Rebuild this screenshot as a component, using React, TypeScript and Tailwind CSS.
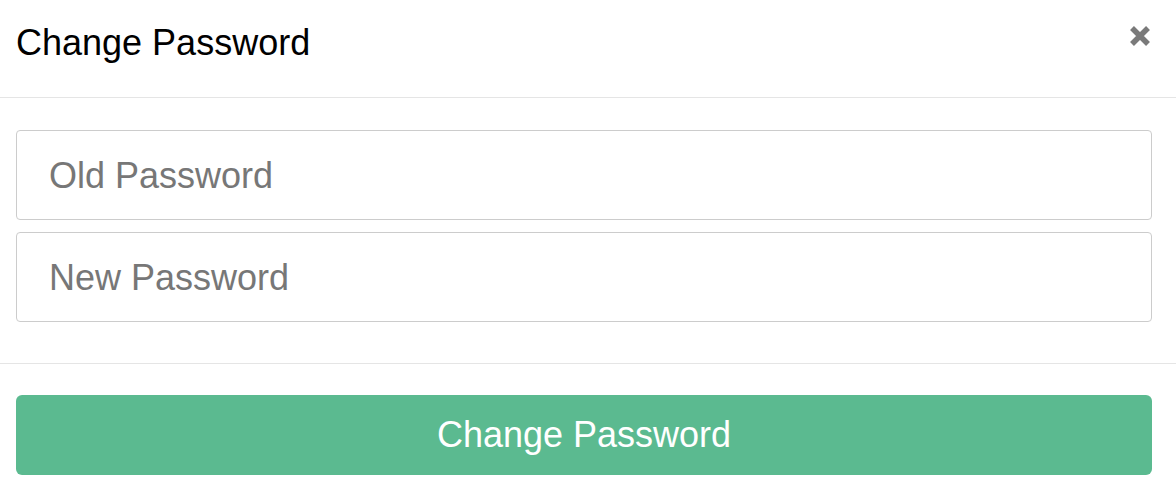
export default function App() {
  return (
    <div className="w-[1176px] h-[500px] bg-white overflow-hidden font-['Liberation_Sans',Arial,sans-serif]">
      <div className="flex items-start justify-between pl-4 pr-6 pt-[17px] pb-[29px] border-b border-[#e5e5e5]">
        <h4 className="text-[36px] leading-[51px] text-black">Change Password</h4>
        <button className="mt-[8px] text-[#7a7a7a]" aria-label="Close">
          <svg width="24" height="22" viewBox="0 0 24 22">
            <path d="M4 3 L20 19 M20 3 L4 19" stroke="currentColor" strokeWidth="5.5" strokeLinecap="butt" />
          </svg>
        </button>
      </div>

      <div className="flex flex-col gap-3 pl-4 pr-6 pt-8 pb-[41px] border-b border-[#e5e5e5]">
        <input
          type="password"
          placeholder="Old Password"
          className="h-[90px] w-full rounded-[4px] border border-[#cccccc] px-8 pt-[2px] text-[36px] placeholder:text-[#777777] outline-none"
        />
        <input
          type="password"
          placeholder="New Password"
          className="h-[90px] w-full rounded-[4px] border border-[#cccccc] px-8 pt-[2px] text-[36px] placeholder:text-[#777777] outline-none"
        />
      </div>

      <div className="pl-4 pr-6 pt-[31px]">
        <button className="w-full h-[80px] rounded-[6px] bg-[#5bba90] text-white text-[36px]">
          Change Password
        </button>
      </div>
    </div>
  );
}
